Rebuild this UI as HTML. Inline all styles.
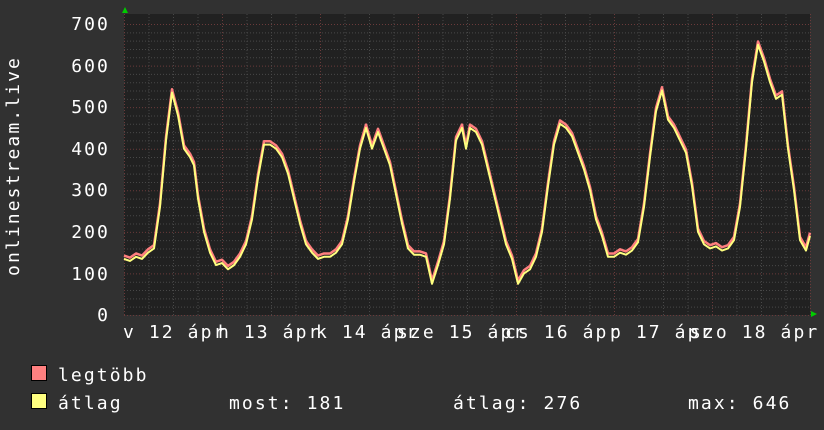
<!DOCTYPE html>
<html><head><meta charset="utf-8"><style>
html,body{margin:0;padding:0;background:#313131;}
svg{display:block}
text{font-family:"DejaVu Sans Mono","Liberation Mono",monospace;fill:#fff;font-size:18px;letter-spacing:2.1px}
</style></head><body>
<svg width="824" height="430" viewBox="0 0 824 430" xmlns="http://www.w3.org/2000/svg">
<rect width="824" height="430" fill="#313131"/>
<rect x="124" y="14" width="686" height="301" fill="#212121"/>
<g id="grid"></g>
<script>
(function(){
var ns="http://www.w3.org/2000/svg",g=document.getElementById('grid');
function ln(x1,y1,x2,y2,c){var l=document.createElementNS(ns,'line');l.setAttribute('x1',x1);l.setAttribute('y1',y1);l.setAttribute('x2',x2);l.setAttribute('y2',y2);l.setAttribute('stroke',c);l.setAttribute('stroke-dasharray','1,2');g.appendChild(l);}
for(var v=0;v<=700;v+=20){var y=315.5-v*0.4157;ln(124,y,810,y,v%100==0?'#6a3a3a':'#484848');}
for(var i=0;i<=28;i++){var x=124.5+i*24.5;ln(x,14,x,315,i%4==0?'#6a3a3a':'#484848');}
})();
</script>
<g transform="translate(0,315) scale(1,-0.4157)" fill="none" stroke-linejoin="round">
<polyline vector-effect="non-scaling-stroke" stroke="#ff7f7f" stroke-width="2.5" transform="translate(0,8)" points="124,135 130,130 136,140 142,135 148,150 154,160 160,260 166,420 172,535 178,480 184,400 190,380 194,360 198,280 204,200 210,150 216,120 222,125 228,110 234,120 240,140 246,170 252,230 258,330 264,410 270,410 276,400 282,380 288,340 294,280 300,220 306,170 312,150 318,135 324,140 330,140 336,150 342,170 348,230 354,320 360,400 366,450 372,400 378,440 384,400 390,360 396,290 402,220 408,160 414,145 420,145 426,140 432,75 438,120 444,170 450,280 456,420 462,450 466,400 470,450 476,440 482,410 488,350 494,290 500,230 506,170 512,135 518,75 524,100 530,110 536,140 542,200 548,310 554,410 560,460 566,450 572,430 578,390 584,350 590,300 596,230 602,190 608,140 614,140 620,150 626,145 632,155 638,175 644,260 650,380 656,490 662,540 668,470 674,450 680,420 686,390 692,310 698,200 704,170 710,160 716,165 722,155 728,160 734,180 740,260 746,400 752,560 758,650 764,610 770,560 776,520 782,530 788,400 794,300 800,180 806,155 810,190"/>
<polyline vector-effect="non-scaling-stroke" stroke="#ffff7f" stroke-width="2" points="124,135 130,130 136,140 142,135 148,150 154,160 160,260 166,420 172,535 178,480 184,400 190,380 194,360 198,280 204,200 210,150 216,120 222,125 228,110 234,120 240,140 246,170 252,230 258,330 264,410 270,410 276,400 282,380 288,340 294,280 300,220 306,170 312,150 318,135 324,140 330,140 336,150 342,170 348,230 354,320 360,400 366,450 372,400 378,440 384,400 390,360 396,290 402,220 408,160 414,145 420,145 426,140 432,75 438,120 444,170 450,280 456,420 462,450 466,400 470,450 476,440 482,410 488,350 494,290 500,230 506,170 512,135 518,75 524,100 530,110 536,140 542,200 548,310 554,410 560,460 566,450 572,430 578,390 584,350 590,300 596,230 602,190 608,140 614,140 620,150 626,145 632,155 638,175 644,260 650,380 656,490 662,540 668,470 674,450 680,420 686,390 692,310 698,200 704,170 710,160 716,165 722,155 728,160 734,180 740,260 746,400 752,560 758,650 764,610 770,560 776,520 782,530 788,400 794,300 800,180 806,155 810,190"/>
</g>
<polygon points="122,13 128,13 125,7" fill="#00cc00"/>
<polygon points="811,311 811,317 817,314" fill="#00cc00"/>
<g text-anchor="end">
<text x="110" y="30">700</text>
<text x="110" y="72">600</text>
<text x="110" y="113">500</text>
<text x="110" y="155">400</text>
<text x="110" y="196">300</text>
<text x="110" y="238">200</text>
<text x="110" y="280">100</text>
<text x="110" y="321">0</text>
</g>
<text transform="translate(19,166) rotate(-90)" text-anchor="middle">onlinestream.live</text>
<text x="123" y="338">v 12 ápr</text>
<text x="218" y="338">h 13 ápr</text>
<text x="316" y="338">k 14 ápr</text>
<text x="397" y="338">sze 15 ápr</text>
<text x="505" y="338">cs 16 ápr</text>
<text x="610" y="338">p 17 ápr</text>
<text x="690" y="338">szo 18 ápr</text>
<rect x="31.5" y="365.5" width="15" height="15" fill="#ff8080" stroke="#000"/>
<rect x="31.5" y="393.5" width="15" height="15" fill="#ffff80" stroke="#000"/>
<text x="58" y="381">legtöbb</text>
<text x="58" y="409">átlag</text>
<text x="229" y="409">most: 181</text>
<text x="453" y="409">átlag: 276</text>
<text x="688" y="409">max: 646</text>
</svg>
</body></html>
